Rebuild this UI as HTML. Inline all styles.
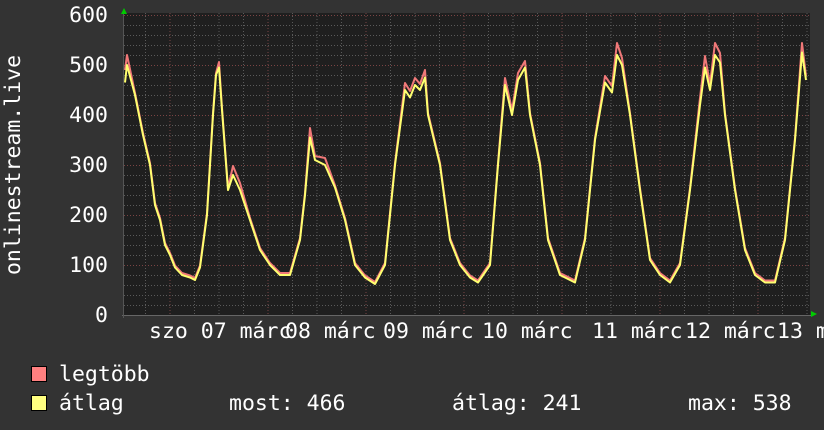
<!DOCTYPE html>
<html><head><meta charset="utf-8"><style>
html,body{margin:0;padding:0;}
body{width:824px;height:430px;background:#333;position:relative;overflow:hidden;font-family:"DejaVu Sans Mono","Liberation Mono",monospace;color:#fff;font-size:21.5px;}
.t{position:absolute;white-space:pre;line-height:1;}
.yl{position:absolute;right:716px;text-align:right;line-height:1;}
svg{position:absolute;left:0;top:0;}
</style></head><body>
<svg width="824" height="430">
<rect x="123" y="13" width="687" height="303" fill="#1f1f1f"/>
<g stroke="#5a5a5a" stroke-width="1" stroke-dasharray="1,2">
<line x1="124" x2="810" y1="25.5" y2="25.5"/><line x1="124" x2="810" y1="35.5" y2="35.5"/><line x1="124" x2="810" y1="45.5" y2="45.5"/><line x1="124" x2="810" y1="55.5" y2="55.5"/>
<line x1="124" x2="810" y1="75.5" y2="75.5"/><line x1="124" x2="810" y1="85.5" y2="85.5"/><line x1="124" x2="810" y1="95.5" y2="95.5"/><line x1="124" x2="810" y1="105.5" y2="105.5"/>
<line x1="124" x2="810" y1="125.5" y2="125.5"/><line x1="124" x2="810" y1="135.5" y2="135.5"/><line x1="124" x2="810" y1="145.5" y2="145.5"/><line x1="124" x2="810" y1="155.5" y2="155.5"/>
<line x1="124" x2="810" y1="175.5" y2="175.5"/><line x1="124" x2="810" y1="185.5" y2="185.5"/><line x1="124" x2="810" y1="195.5" y2="195.5"/><line x1="124" x2="810" y1="205.5" y2="205.5"/>
<line x1="124" x2="810" y1="225.5" y2="225.5"/><line x1="124" x2="810" y1="235.5" y2="235.5"/><line x1="124" x2="810" y1="245.5" y2="245.5"/><line x1="124" x2="810" y1="255.5" y2="255.5"/>
<line x1="124" x2="810" y1="275.5" y2="275.5"/><line x1="124" x2="810" y1="285.5" y2="285.5"/><line x1="124" x2="810" y1="295.5" y2="295.5"/><line x1="124" x2="810" y1="305.5" y2="305.5"/>
<line y1="13" y2="315" x1="145.5" x2="145.5"/><line y1="13" y2="315" x1="194.5" x2="194.5"/><line y1="13" y2="315" x1="219" x2="219"/><line y1="13" y2="315" x1="243.5" x2="243.5"/>
<line y1="13" y2="315" x1="292.5" x2="292.5"/><line y1="13" y2="315" x1="317" x2="317"/><line y1="13" y2="315" x1="341.5" x2="341.5"/>
<line y1="13" y2="315" x1="390.5" x2="390.5"/><line y1="13" y2="315" x1="415" x2="415"/><line y1="13" y2="315" x1="439.5" x2="439.5"/>
<line y1="13" y2="315" x1="488.5" x2="488.5"/><line y1="13" y2="315" x1="513" x2="513"/><line y1="13" y2="315" x1="537.5" x2="537.5"/>
<line y1="13" y2="315" x1="586.5" x2="586.5"/><line y1="13" y2="315" x1="611" x2="611"/><line y1="13" y2="315" x1="635.5" x2="635.5"/>
<line y1="13" y2="315" x1="684.5" x2="684.5"/><line y1="13" y2="315" x1="709" x2="709"/><line y1="13" y2="315" x1="733.5" x2="733.5"/>
<line y1="13" y2="315" x1="782.5" x2="782.5"/><line y1="13" y2="315" x1="807" x2="807"/>
</g>
<g stroke="#7a4444" stroke-width="1" stroke-dasharray="1,2">
<line x1="124" x2="810" y1="15.5" y2="15.5"/><line x1="124" x2="810" y1="65.5" y2="65.5"/><line x1="124" x2="810" y1="115.5" y2="115.5"/><line x1="124" x2="810" y1="165.5" y2="165.5"/><line x1="124" x2="810" y1="215.5" y2="215.5"/><line x1="124" x2="810" y1="265.5" y2="265.5"/>
<line y1="13" y2="315" x1="170" x2="170"/><line y1="13" y2="315" x1="268" x2="268"/><line y1="13" y2="315" x1="366" x2="366"/><line y1="13" y2="315" x1="464" x2="464"/><line y1="13" y2="315" x1="562" x2="562"/><line y1="13" y2="315" x1="660" x2="660"/><line y1="13" y2="315" x1="758" x2="758"/>
</g>
<line x1="122" x2="812" y1="315.5" y2="315.5" stroke="#666"/>
<line x1="123.5" x2="123.5" y1="10" y2="318" stroke="#555"/>
<polygon points="121,14 124,8 127,14" fill="#0c0"/>
<polygon points="811,311 817,314 811,317" fill="#0c0"/>
<g fill="none" stroke-linejoin="round" stroke-width="2">
<polyline stroke="#f07878" transform="translate(0,-2)" points="125,72 127,57 135,95 143,135 150,165 155,205 160,220 165,245 170,255 175,267.5 182,275 190,277.5 195,280 200,267.5 207,215 213,115 216,75 219,64 222,110 228,190 233,168 240,185 250,220 260,250 270,265 280,275 290,275 300,240 305,195 310,130 315,158 325,160 335,187.5 345,220 355,265 365,277.5 375,284 385,265 395,165 405,85 410,93 415,80 420,86 425,72 428,115 440,165 450,240 460,265 470,277.5 478,282.5 490,265 498,165 505,80 512,112 518,75 525,63 530,115 540,165 548,240 560,275 575,282.5 585,240 595,140 605,78 612,88 617,45 622,60 630,115 640,190 650,260 660,275 670,282.5 680,265 690,190 700,100 705,58 710,86 715,45 720,55 725,115 735,190 745,250 755,275 765,282.5 775,282.5 785,240 795,140 802,45 806,78"/>
<polyline stroke="#ffff70" points="125,82.5 127,65 135,95 143,135 150,165 155,205 160,220 165,245 170,255 175,267.5 182,275 190,277.5 195,280 200,267.5 207,215 213,115 216,75 219,67.5 222,110 228,190 233,175 240,190 250,220 260,250 270,265 280,275 290,275 300,240 305,195 310,137.5 315,160 325,165 335,187.5 345,220 355,265 365,277.5 375,284 385,265 395,165 405,90 410,97.5 415,85 420,90 425,77.5 428,115 440,165 450,240 460,265 470,277.5 478,282.5 490,265 498,165 505,85 512,115 518,80 525,67.5 530,115 540,165 548,240 560,275 575,282.5 585,240 595,140 605,82.5 612,92.5 617,55 622,65 630,115 640,190 650,260 660,275 670,282.5 680,265 690,190 700,105 705,67.5 710,90 715,55 720,62.5 725,115 735,190 745,250 755,275 765,282.5 775,282.5 785,240 795,140 802,52.5 806,80"/>
</g>
<rect x="31.5" y="366.5" width="15" height="15" fill="#ff8080" stroke="#000"/>
<rect x="31.5" y="395.5" width="15" height="15" fill="#ffff80" stroke="#000"/>
<text x="0" y="0" transform="translate(20,165) rotate(-90)" text-anchor="middle" fill="#fff" font-family="DejaVu Sans Mono, monospace" font-size="21.5">onlinestream.live</text>
</svg>
<div class="yl" style="top:5px">600</div>
<div class="yl" style="top:55px">500</div>
<div class="yl" style="top:105px">400</div>
<div class="yl" style="top:155px">300</div>
<div class="yl" style="top:205px">200</div>
<div class="yl" style="top:255px">100</div>
<div class="yl" style="top:305px">0</div>
<div class="t" style="left:149px;top:321px">szo 07 márc</div>
<div class="t" style="left:285px;top:321px">08 márc</div>
<div class="t" style="left:383px;top:321px">09 márc</div>
<div class="t" style="left:482px;top:321px">10 márc</div>
<div class="t" style="left:592px;top:321px">11 márc</div>
<div class="t" style="left:685px;top:321px">12 márc</div>
<div class="t" style="left:777px;top:321px">13 m</div>
<div class="t" style="left:59px;top:364px">legtöbb</div>
<div class="t" style="left:59px;top:393px">átlag</div>
<div class="t" style="left:229px;top:393px">most: 466</div>
<div class="t" style="left:452px;top:393px">átlag: 241</div>
<div class="t" style="left:688px;top:393px">max: 538</div>
</body></html>
